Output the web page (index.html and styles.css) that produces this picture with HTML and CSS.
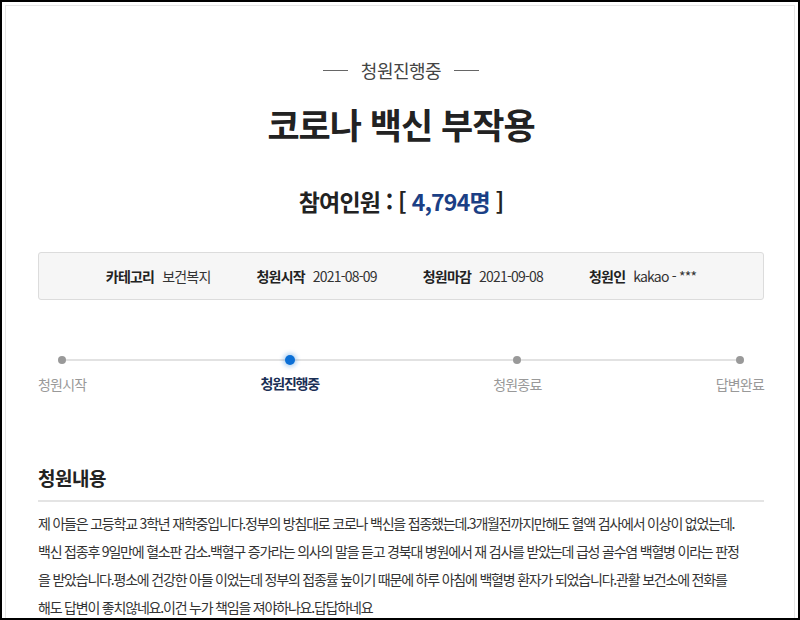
FILE: index.html
```html
<!DOCTYPE html>
<html lang="ko">
<head>
<meta charset="utf-8">
<link rel="stylesheet" href="styles.css">
</head>
<body>
<div class="frame">
  <div class="page">
    <div class="status"><span class="dash"></span><span>청원진행중</span><span class="dash"></span></div>
    <h1 class="title">코로나 백신 부작용</h1>
    <div class="count">참여인원 : [ <span class="num">4,794명</span> ]</div>
    <div class="info">
      <div class="item"><b>카테고리</b><span>보건복지</span></div>
      <div class="item"><b>청원시작</b><span>2021-08-09</span></div>
      <div class="item"><b>청원마감</b><span>2021-09-08</span></div>
      <div class="item"><b>청원인</b><span>kakao - ***</span></div>
    </div>
    <div class="progress">
      <div class="track"></div>
      <div class="step"><i class="dot"></i><span>청원시작</span></div>
      <div class="step active"><i class="dot"></i><span>청원진행중</span></div>
      <div class="step"><i class="dot"></i><span>청원종료</span></div>
      <div class="step"><i class="dot"></i><span>답변완료</span></div>
    </div>
    <h2 class="heading">청원내용</h2>
    <div class="content">제 아들은 고등학교 3학년 재학중입니다.정부의 방침대로 코로나 백신을 접종했는데.3개월전까지만해도 혈액 검사에서 이상이 없었는데.<br>백신 접종후 9일만에 혈소판 감소.백혈구 증가라는 의사의 말을 듣고 경북대 병원에서 재 검사를 받았는데 급성 골수염 백혈병 이라는 판정<br>을 받았습니다.평소에 건강한 아들 이었는데 정부의 접종률 높이기 때문에 하루 아침에 백혈병 환자가 되었습니다.관활 보건소에 전화를<br>해도 답변이 좋치않네요.이건 누가 책임을 져야하나요.답답하네요</div>
  </div>
</div>
</body>
</html>
```

FILE: styles.css
```css
* { box-sizing: border-box; }
html, body { margin: 0; padding: 0; background: #fff; }
body {
  font-family: "Noto Sans CJK KR", "Noto Sans", sans-serif;
  color: #333;
}
.frame {
  width: 800px;
  height: 620px;
  border: 2px solid #000;
  overflow: hidden;
  padding: 3px 3px 0 3px;
}
.page {
  height: 100%;
  border: 1px solid #e6e6e6;
  border-bottom: none;
  padding: 0 30px 0 32px;
}
.status {
  display: flex;
  justify-content: center;
  align-items: center;
  gap: 13px;
  margin-top: 52px;
  font-size: 18px;
  line-height: 24px;
  color: #444;
  letter-spacing: -0.5px;
}
.dash {
  width: 25px;
  height: 1px;
  background: #666;
}
.title {
  margin: 18px 0 0;
  text-align: center;
  font-size: 35px;
  line-height: 48px;
  font-weight: 700;
  color: #222;
  letter-spacing: -1px;
}
.count {
  margin-top: 38px;
  text-align: center;
  font-size: 23px;
  line-height: 30px;
  font-weight: 700;
  color: #222;
  letter-spacing: -0.8px;
}
.count .num { color: #1b3f85; }
.info {
  margin-top: 36px;
  height: 48px;
  background: #f6f6f6;
  border: 1px solid #dcdcdc;
  border-radius: 3px;
  display: flex;
  justify-content: center;
  align-items: center;
  gap: 46px;
  font-size: 14px;
  letter-spacing: -0.8px;
  color: #333;
}
.info .item { display: flex; gap: 8px; align-items: baseline; }
.info b { font-weight: 700; color: #222; }
.progress {
  position: relative;
  margin-top: 54px;
  display: flex;
  justify-content: space-between;
}
.track {
  position: absolute;
  left: 24px;
  right: 24px;
  top: 5px;
  height: 2px;
  background: #e2e2e2;
}
.step {
  position: relative;
  display: flex;
  flex-direction: column;
  align-items: center;
  gap: 10px;
  font-size: 14px;
  line-height: 20px;
  color: #999;
  letter-spacing: -0.8px;
}
.dot {
  width: 8px;
  height: 8px;
  margin-top: 2px;
  border-radius: 50%;
  background: #999;
}
.step.active { color: #1a2f55; font-weight: 700; letter-spacing: -1.2px; }
.step.active .dot {
  width: 10px;
  height: 10px;
  margin-top: 1px;
  margin-bottom: -2px;
  background: #0b6fd6;
  box-shadow: 0 0 4px 2px rgba(11, 111, 214, 0.3);
}
.heading {
  margin: 70px 0 0;
  font-size: 19px;
  line-height: 28px;
  font-weight: 700;
  color: #222;
  letter-spacing: -0.5px;
  padding-bottom: 8px;
  border-bottom: 2px solid #e4e4e4;
}
.content {
  margin-top: 7px;
  font-size: 14px;
  line-height: 28px;
  color: #333;
  letter-spacing: -1.2px;
  white-space: nowrap;
}
```
